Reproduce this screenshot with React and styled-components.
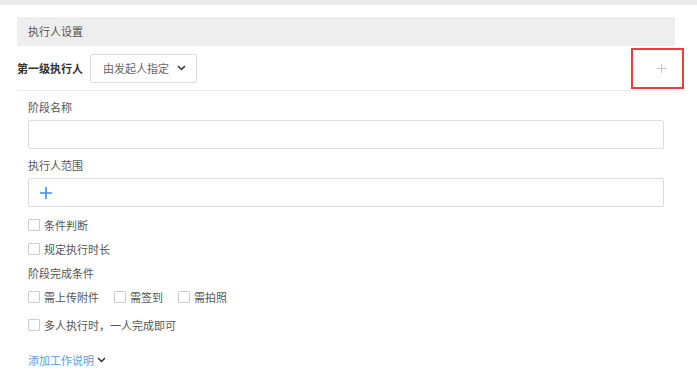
import React from "react";
import styled, { createGlobalStyle } from "styled-components";

const GlobalStyle = createGlobalStyle`
  body {
    margin: 0;
    background: #fff;
    font-family: "Noto Sans CJK SC", "Liberation Sans", sans-serif;
    font-size: 11px;
    color: #555;
  }
`;

const TopBar = styled.div`
  height: 5px;
  background: #ebebeb;
`;

const Panel = styled.div`
  padding: 12px 22px 0 17px;
`;

const SectionHeader = styled.div`
  height: 29px;
  line-height: 29px;
  padding-left: 11px;
  background: #eeeeee;
  color: #555;
`;

const LevelRow = styled.div`
  display: flex;
  align-items: center;
  height: 44px;
  border-bottom: 1px solid #eeeeee;
`;

const LevelLabel = styled.span`
  font-weight: bold;
  color: #333;
  width: 73px;
`;

const Select = styled.div`
  display: flex;
  align-items: center;
  justify-content: space-between;
  box-sizing: border-box;
  width: 107px;
  height: 29px;
  padding: 0 10px 0 12px;
  border: 1px solid #dddddd;
  border-radius: 2px;
  color: #666;
`;

const AddButton = styled.div`
  margin-left: auto;
  margin-right: -9px;
  box-sizing: border-box;
  width: 53px;
  height: 41px;
  border: 2px solid #ef3b3b;
  display: flex;
  align-items: center;
  justify-content: center;
  padding-left: 8px;
`;

const Body = styled.div`
  padding: 0 11px;
`;

const FieldLabel = styled.div`
  line-height: 17px;
  padding-top: ${(p) => p.top || 0}px;
  margin-bottom: 4px;
  color: #555;
`;

const Input = styled.div`
  box-sizing: border-box;
  height: 29px;
  border: 1px solid #dddddd;
  border-radius: 2px;
  display: flex;
  align-items: center;
  padding-left: 11px;
`;

const CheckRow = styled.div`
  display: flex;
  align-items: center;
  gap: 15px;
  height: 24px;
  margin-top: ${(p) => p.top || 0}px;
`;

const CheckItem = styled.label`
  display: flex;
  align-items: center;
  gap: 4px;
  color: #555;
`;

const Box = styled.span`
  box-sizing: border-box;
  width: 12px;
  height: 12px;
  border: 1px solid #cccccc;
  border-radius: 1px;
  background: #fff;
`;

const GroupLabel = styled.div`
  height: 24px;
  line-height: 24px;
  color: #555;
`;

const MoreLink = styled.div`
  display: flex;
  align-items: center;
  gap: 3px;
  height: 24px;
  margin-top: 11px;
  color: #5b9be6;
`;

const Chevron = ({ color = "#333" }) => (
  <svg width="9" height="6" viewBox="0 0 9 6">
    <polyline
      points="1,1 4.5,4.5 8,1"
      fill="none"
      stroke={color}
      strokeWidth="1.5"
    />
  </svg>
);

const Check = ({ children }) => (
  <CheckItem>
    <Box />
    {children}
  </CheckItem>
);

export default function App() {
  return (
    <>
      <GlobalStyle />
      <TopBar />
      <Panel>
        <SectionHeader>执行人设置</SectionHeader>
        <LevelRow>
          <LevelLabel>第一级执行人</LevelLabel>
          <Select>
            由发起人指定
            <Chevron />
          </Select>
          <AddButton>
            <svg width="9" height="9" viewBox="0 0 9 9">
              <path d="M4.5 0v9M0 4.5h9" stroke="#c4c4c4" strokeWidth="1" />
            </svg>
          </AddButton>
        </LevelRow>
        <Body>
          <FieldLabel top={8}>阶段名称</FieldLabel>
          <Input />
          <FieldLabel top={8}>执行人范围</FieldLabel>
          <Input>
            <svg width="12" height="12" viewBox="0 0 12 12">
              <path d="M6 0v12M0 6h12" stroke="#3d8ee8" strokeWidth="1.6" />
            </svg>
          </Input>
          <CheckRow top={6}>
            <Check>条件判断</Check>
          </CheckRow>
          <CheckRow>
            <Check>规定执行时长</Check>
          </CheckRow>
          <GroupLabel>阶段完成条件</GroupLabel>
          <CheckRow>
            <Check>需上传附件</Check>
            <Check>需签到</Check>
            <Check>需拍照</Check>
          </CheckRow>
          <CheckRow top={4}>
            <Check>多人执行时，一人完成即可</Check>
          </CheckRow>
          <MoreLink>
            添加工作说明
            <Chevron />
          </MoreLink>
        </Body>
      </Panel>
    </>
  );
}
